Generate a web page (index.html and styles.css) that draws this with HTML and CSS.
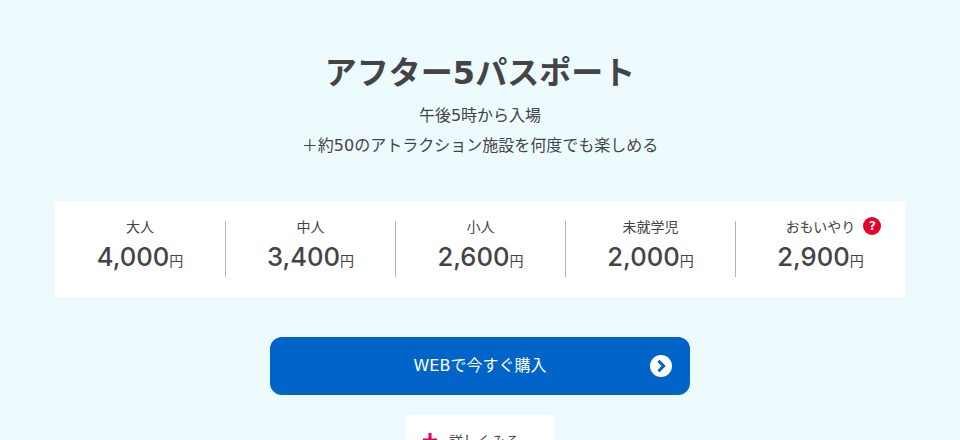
FILE: index.html
```html
<!DOCTYPE html>
<html lang="ja">
<head>
    <meta charset="UTF-8">
    <title>アフター5パスポート</title>
    <link rel="stylesheet" href="styles.css">
</head>
<body>
    <section class="pass">
        <h2 class="pass-title">アフター5パスポート</h2>
        <p class="pass-lead">午後5時から入場<br>＋約50のアトラクション施設を何度でも楽しめる</p>

        <ul class="price-list">
            <li class="price-item">
                <span class="price-label">大人</span>
                <span class="price-value">4,000<small>円</small></span>
            </li>
            <li class="price-item">
                <span class="price-label">中人</span>
                <span class="price-value">3,400<small>円</small></span>
            </li>
            <li class="price-item">
                <span class="price-label">小人</span>
                <span class="price-value">2,600<small>円</small></span>
            </li>
            <li class="price-item">
                <span class="price-label">未就学児</span>
                <span class="price-value">2,000<small>円</small></span>
            </li>
            <li class="price-item">
                <span class="price-label">おもいやり<span class="help-mark">?</span></span>
                <span class="price-value">2,900<small>円</small></span>
            </li>
        </ul>

        <a class="buy-button" href="#">
            WEBで今すぐ購入
            <svg class="buy-arrow" width="22" height="22" viewBox="0 0 22 22">
                <circle cx="11" cy="11" r="11" fill="#fff"/>
                <path d="M8.5 5.8 13.6 11 8.5 16.2" fill="none" stroke="#0064c8" stroke-width="3"/>
            </svg>
        </a>

        <a class="more-button" href="#">
            <svg class="more-plus" width="14" height="14" viewBox="0 0 14 14">
                <path d="M7 0V14M0 7H14" stroke="#e6005a" stroke-width="3"/>
            </svg>
            詳しくみる
        </a>
    </section>
</body>
</html>
```

FILE: styles.css
```css
html,
body {
    height: 440px;
    overflow: hidden;
}

body {
    margin: 0;
    background-color: #edfbff;
    color: #444;
    font-family: "DejaVu Sans", "Noto Sans CJK JP", sans-serif;
}

.pass {
    display: flex;
    flex-direction: column;
    align-items: center;
    padding-top: 49px;
}

.pass-title {
    margin: 0;
    font-size: 32px;
    line-height: 48px;
    font-weight: bold;
}

.pass-lead {
    margin: 4px 0 0;
    font-size: 16px;
    line-height: 30px;
    text-align: center;
}

.price-list {
    display: grid;
    grid-template-columns: repeat(5, 1fr);
    width: 850px;
    height: 96px;
    margin: 40px 0 0;
    padding: 20px 0;
    box-sizing: border-box;
    list-style: none;
    background-color: #fff;
}

.price-item {
    display: flex;
    flex-direction: column;
    align-items: center;
    border-left: 1px solid #b4b4b4;
}

.price-item:first-child {
    border-left: none;
}

.price-label {
    position: relative;
    font-size: 14px;
    line-height: 14px;
    margin-top: -1px;
}

.help-mark {
    position: absolute;
    top: -3px;
    right: -26px;
    width: 18px;
    height: 18px;
    border-radius: 50%;
    background-color: #e6002d;
    color: #fff;
    font-size: 12px;
    font-weight: bold;
    line-height: 18px;
    text-align: center;
}

.price-value {
    margin-top: 7px;
    font-family: Inter, "Noto Sans CJK JP", sans-serif;
    font-size: 25.6px;
    line-height: 32px;
    font-weight: 500;
}

.price-value small {
    font-size: 14px;
    font-weight: normal;
}

.buy-button {
    position: relative;
    width: 420px;
    height: 58px;
    margin-top: 40px;
    border-radius: 12px;
    background-color: #0064c8;
    color: #fff;
    font-size: 16px;
    line-height: 58px;
    text-align: center;
    text-decoration: none;
}

.buy-arrow {
    position: absolute;
    top: 18px;
    right: 18px;
}

.more-button {
    display: flex;
    align-items: center;
    gap: 12px;
    width: 150px;
    height: 50px;
    margin-top: 20px;
    padding-left: 18px;
    box-sizing: border-box;
    background-color: #fff;
    color: #444;
    font-size: 14px;
    text-decoration: none;
}
```
